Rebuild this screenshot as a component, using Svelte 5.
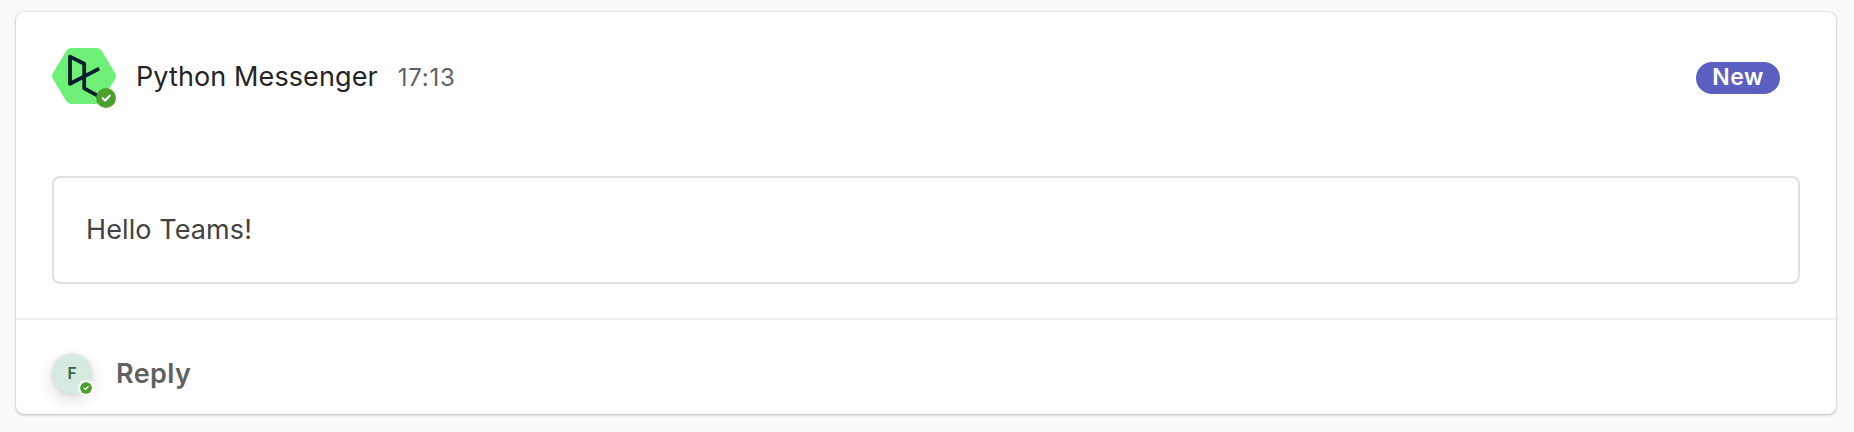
<script lang="ts">
  type Message = {
    author: string;
    time: string;
    text: string;
    isNew: boolean;
  };

  const message: Message = {
    author: "Python Messenger",
    time: "17:13",
    text: "Hello Teams!",
    isNew: true,
  };

  const userInitial = "F";
</script>

{#snippet presence()}
  <svg class="presence" viewBox="0 0 20 20" aria-label="Available">
    <circle cx="10" cy="10" r="10" fill="#4b9f2d" />
    <path
      d="M6.7 10.2 9.2 12.5 13.7 7.7"
      fill="none"
      stroke="#fff"
      stroke-width="2.1"
      stroke-linecap="round"
      stroke-linejoin="round"
    />
  </svg>
{/snippet}

<main>
  <article class="card">
    <header>
      <div class="avatar bot">
        <svg class="logo" viewBox="0 0 64 64" aria-hidden="true">
          <path
            d="M19 4H45Q48 4 49.8 7L63 29Q65 32 63 35L49.8 57Q48 60 45 60H19Q16 60 14.2 57L1 35Q-1 32 1 29L14.2 7Q16 4 19 4Z"
            fill="#6df075"
          />
          <path
            d="M47.2 24.6 18 39.7V12.6L32.2 19.8V44.3L48 52.8"
            fill="none"
            stroke="#051d30"
            stroke-width="3.8"
            stroke-linejoin="round"
          />
        </svg>
        {@render presence()}
      </div>
      <span class="author">{message.author}</span>
      <time>{message.time}</time>
      {#if message.isNew}
        <span class="badge">New</span>
      {/if}
    </header>

    <div class="body">{message.text}</div>

    <footer>
      <div class="avatar user">
        {userInitial}
        {@render presence()}
      </div>
      <button type="button">Reply</button>
    </footer>
  </article>
</main>

<style>
  main {
    box-sizing: border-box;
    height: 432px;
    padding: 12px 18px 18px 16px;

    background: #fafafa;

    font-family: Inter, "Liberation Sans", sans-serif;
  }

  .card {
    height: 402px;

    background: #fff;
    border-radius: 8px;
    box-shadow:
      0 1px 3px rgba(0, 0, 0, 0.25),
      0 0 2px rgba(0, 0, 0, 0.12);
  }

  header {
    display: flex;
    align-items: center;
    height: 64px;
    padding: 32px 56px 0 36px;
  }

  .avatar {
    position: relative;
    flex: none;
  }

  .bot {
    width: 64px;
    height: 64px;
    margin-right: 20px;
  }

  .logo {
    display: block;
    width: 64px;
    height: 64px;
  }

  .presence {
    position: absolute;
    right: 0;
    bottom: 0;
    width: 20px;
    height: 20px;
  }

  .author {
    color: #242424;
    font-size: 27px;
    letter-spacing: 0.1px;
  }

  time {
    margin: 2px 0 0 20px;
    color: #616161;
    font-size: 24px;
    letter-spacing: 0.75px;
  }

  .badge {
    box-sizing: border-box;
    width: 84px;
    height: 32px;
    margin: 4px 0 0 auto;

    background: #5b5fc0;
    border-radius: 16px;

    color: #fff;
    font-size: 23px;
    font-weight: 600;
    letter-spacing: 0.5px;
    line-height: 30px;
    text-align: center;
  }

  .body {
    box-sizing: border-box;
    height: 108px;
    margin: 68px 36px 34px;
    padding: 0 32px;

    border: 2px solid #e0e0e0;
    border-radius: 8px;

    color: #424242;
    font-size: 27px;
    letter-spacing: 0.1px;
    line-height: 104px;
  }

  footer {
    display: flex;
    align-items: center;
    height: 40px;
    padding: 34px 36px 20px;
    border-top: 2px solid #f0f0f0;
  }

  .user {
    width: 40px;
    height: 40px;

    background: #d6eae0;
    border-radius: 50%;
    box-shadow:
      0 6px 16px rgba(0, 0, 0, 0.14),
      0 0 4px rgba(0, 0, 0, 0.1);

    color: #366848;
    font-family: Roboto, sans-serif;
    font-size: 16px;
    font-weight: 600;
    line-height: 40px;
    text-align: center;
  }

  .user .presence {
    right: -2px;
    bottom: -2px;
    width: 12px;
    height: 12px;

    background: #fff;
    border: 2px solid #fff;
    border-radius: 50%;
  }

  button {
    padding: 0;
    margin: -2px 0 0 24px;

    background: none;
    border: none;

    color: #616161;
    font-family: inherit;
    font-size: 27px;
    font-weight: 600;
    letter-spacing: 0.4px;
  }
</style>
